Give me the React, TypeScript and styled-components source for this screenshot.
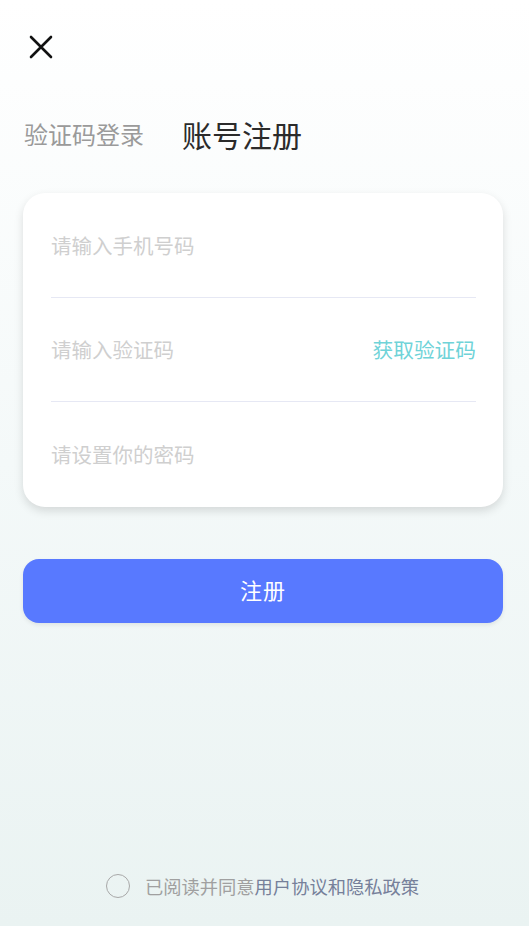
import React, { useState } from "react";
import styled, { createGlobalStyle } from "styled-components";

const GlobalStyle = createGlobalStyle`
  html, body {
    margin: 0;
    padding: 0;
  }
  body {
    font-family: "Noto Sans CJK SC", "Noto Sans", sans-serif;
  }
  * {
    box-sizing: border-box;
  }
`;

function App() {
  const [tab, setTab] = useState(1);
  const [agreed, setAgreed] = useState(false);

  return (
    <Page>
      <GlobalStyle />
      <TopBar>
        <CloseButton type="button" aria-label="关闭">
          <svg width="26" height="26" viewBox="0 0 26 26">
            <path
              d="M3 3 L23 23 M23 3 L3 23"
              stroke="#111"
              strokeWidth="2.6"
              strokeLinecap="round"
            />
          </svg>
        </CloseButton>
      </TopBar>

      <Tabs>
        <Tab $active={tab === 0} onClick={() => setTab(0)}>
          验证码登录
        </Tab>
        <Tab $active={tab === 1} onClick={() => setTab(1)}>
          账号注册
        </Tab>
      </Tabs>

      <Card>
        <Row>
          <Field placeholder="请输入手机号码" />
        </Row>
        <Row>
          <Field placeholder="请输入验证码" />
          <CodeLink type="button">获取验证码</CodeLink>
        </Row>
        <Row>
          <Field type="password" placeholder="请设置你的密码" />
        </Row>
      </Card>

      <SubmitButton type="button">注册</SubmitButton>

      <Footer>
        <Check
          type="button"
          $checked={agreed}
          onClick={() => setAgreed((a) => !a)}
          aria-label="同意"
        />
        <Agreement>
          已阅读并同意<AgreementLink>用户协议和隐私政策</AgreementLink>
        </Agreement>
      </Footer>
    </Page>
  );
}

const Page = styled.div`
  min-height: 926px;
  display: flex;
  flex-direction: column;
  padding: 0 26px 0 23px;
  background: linear-gradient(180deg, #ffffff 0%, #f4f9f9 50%, #eaf3f2 100%);
`;

const TopBar = styled.div`
  height: 94px;
  display: flex;
  align-items: center;
`;

const CloseButton = styled.button`
  border: 0;
  background: none;
  padding: 0;
  margin-left: 5px;
  width: 26px;
  height: 26px;
  display: flex;
  cursor: pointer;
`;

const Tabs = styled.div`
  height: 80px;
  display: flex;
  align-items: center;
  gap: 38px;
  padding-left: 1px;
`;

const Tab = styled.div<{ $active: boolean }>`
  font-size: ${(p) => (p.$active ? "30px" : "24px")};
  color: ${(p) => (p.$active ? "#2b2b2b" : "#9a9a9a")};
  line-height: 1;
  cursor: pointer;
`;

const Card = styled.div`
  margin-top: 19px;
  background: #fff;
  border-radius: 22px;
  padding: 0 27px 0 28px;
  box-shadow: 0 4px 10px rgba(0, 0, 0, 0.13);
`;

const Row = styled.div`
  height: 104.5px;
  display: flex;
  align-items: center;
  border-bottom: 1px solid #e6e8f4;

  &:last-child {
    border-bottom: 0;
  }
`;

const Field = styled.input`
  flex: 1;
  min-width: 0;
  border: 0;
  outline: none;
  background: transparent;
  font-family: inherit;
  font-size: 20.5px;
  color: #333;
  padding: 0;

  &::placeholder {
    color: #cfcfcf;
  }
`;

const CodeLink = styled.button`
  border: 0;
  background: none;
  padding: 0;
  font-family: inherit;
  font-size: 20.7px;
  color: #6fd3d8;
  cursor: pointer;
`;

const SubmitButton = styled.button`
  margin-top: 52px;
  height: 64px;
  border: 0;
  border-radius: 16px;
  background: #5879ff;
  color: #fff;
  font-family: inherit;
  font-size: 22px;
  letter-spacing: 1px;
  padding: 0 0 3px;
  box-shadow: 0 2px 4px rgba(0, 0, 0, 0.08);
  cursor: pointer;
`;

const Footer = styled.div`
  margin-top: auto;
  padding-bottom: 28px;
  height: 52px;
  display: flex;
  align-items: center;
  justify-content: center;
  gap: 15px;
  padding-right: 1px;
`;

const Check = styled.button<{ $checked: boolean }>`
  width: 24px;
  height: 24px;
  border-radius: 50%;
  border: 1.5px solid #a8a8a8;
  background: ${(p) => (p.$checked ? "#5879ff" : "transparent")};
  padding: 0;
  cursor: pointer;
`;

const Agreement = styled.span`
  font-size: 18.3px;
  color: #a0a0a0;
`;

const AgreementLink = styled.span`
  color: #76809a;
`;

export default App;
